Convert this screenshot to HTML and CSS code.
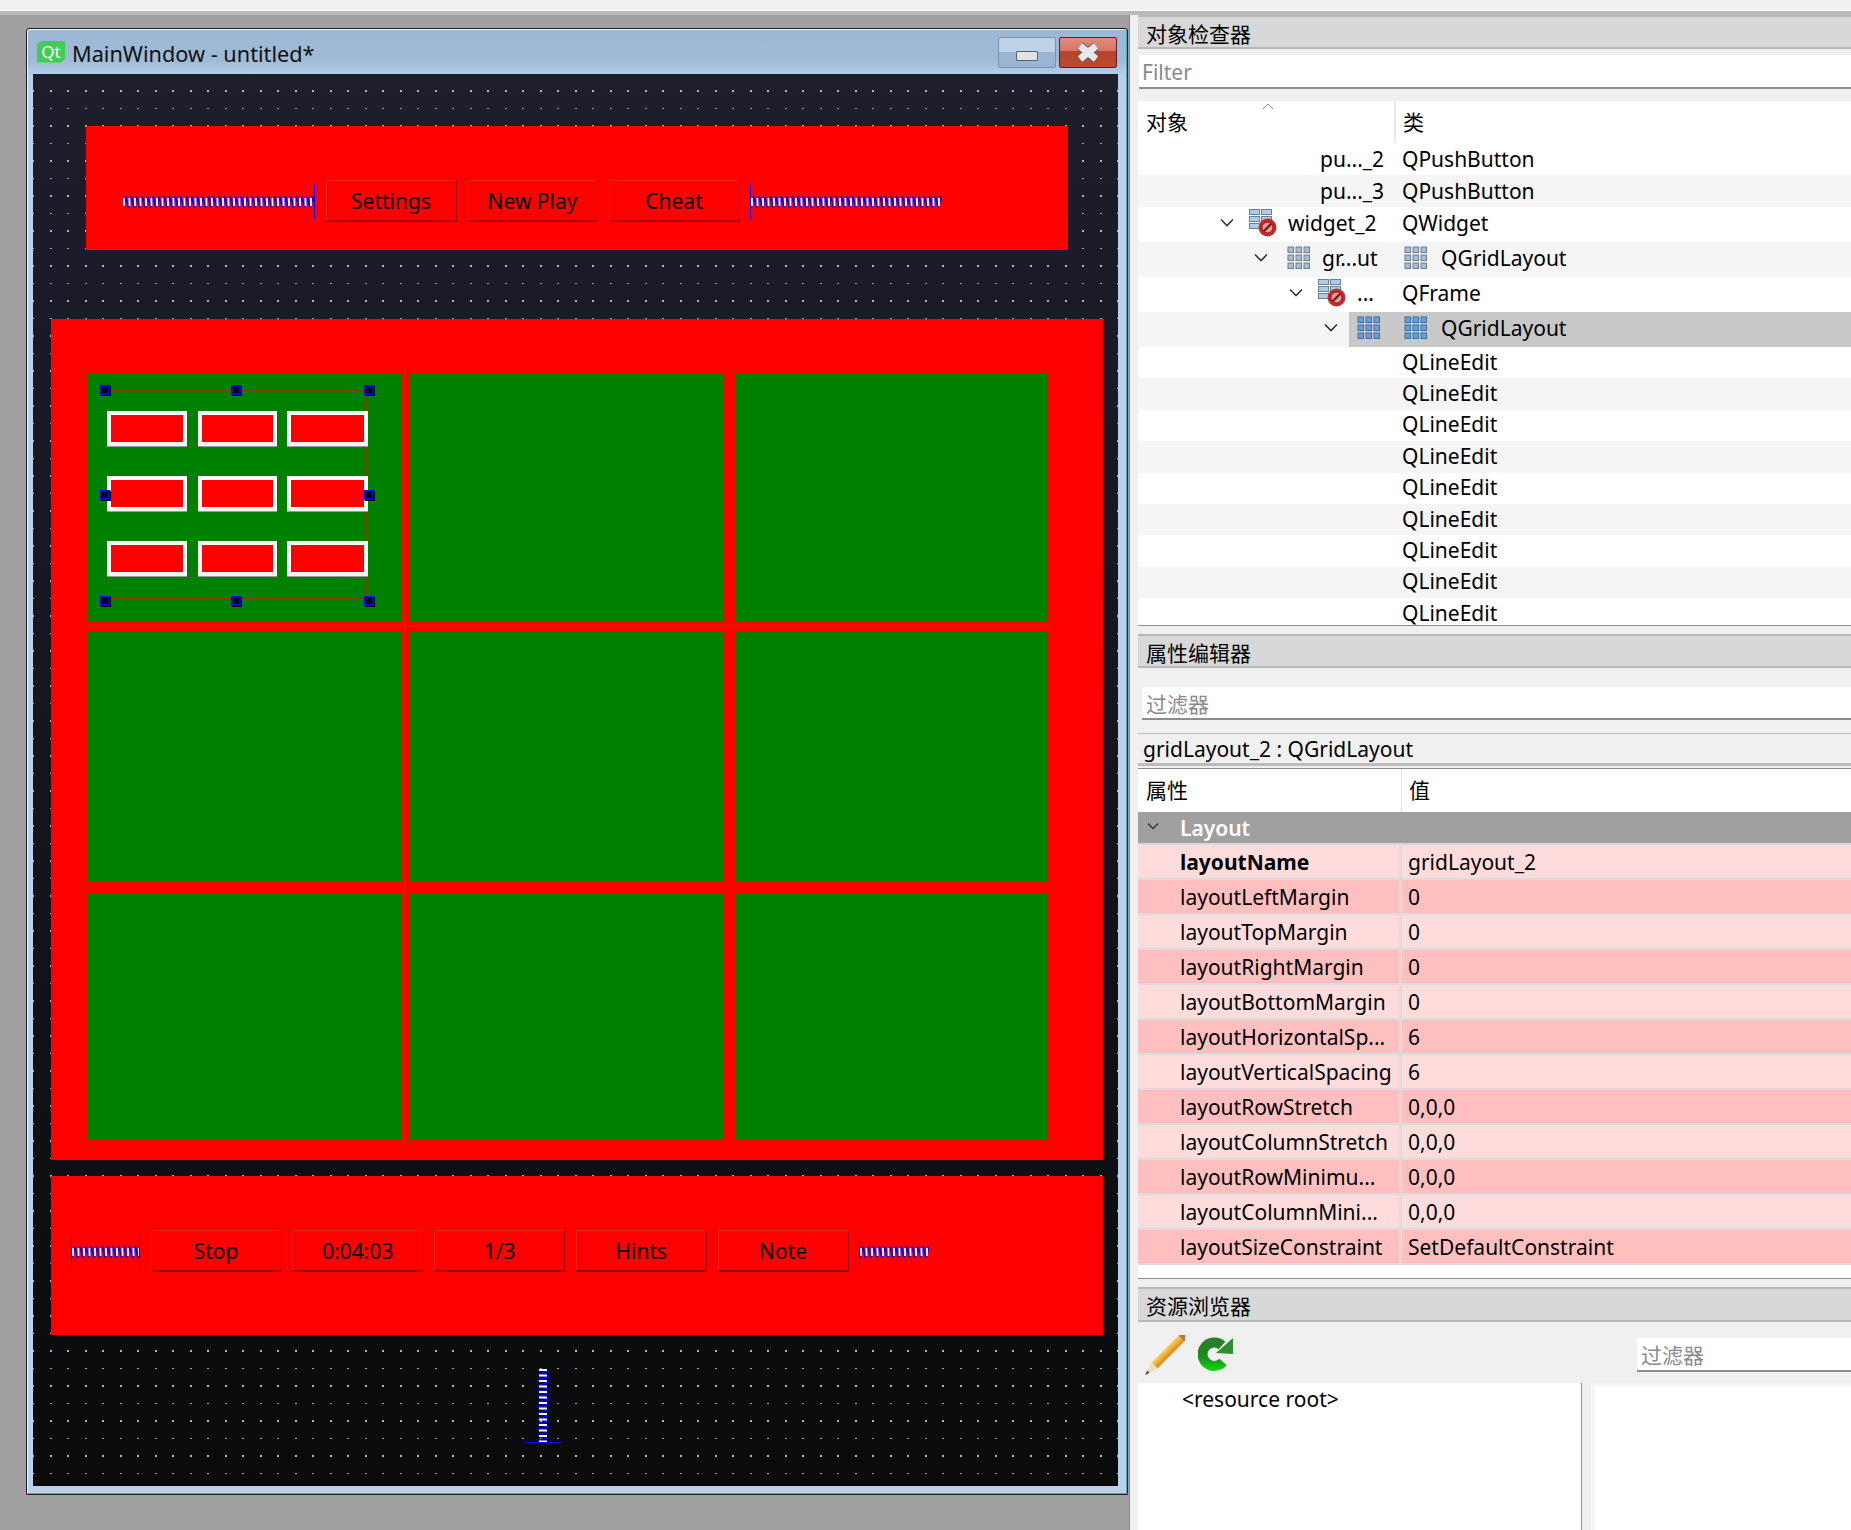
FILE: index.html
```html
<!DOCTYPE html>
<html lang="zh">
<head>
<meta charset="utf-8">
<title>Qt Designer</title>
<link rel="stylesheet" href="styles.css">
</head>
<body>
<svg class="defs" width="0" height="0" aria-hidden="true">
  <defs>
    <symbol id="grid-g" viewBox="0 0 24 24">
      <g fill="#a6bdd6" stroke="#6c7d90" stroke-width="1">
        <rect x="1" y="1" width="5.5" height="5.5"/><rect x="9" y="1" width="5.5" height="5.5"/><rect x="17" y="1" width="5.5" height="5.5"/>
        <rect x="1" y="9" width="5.5" height="5.5"/><rect x="9" y="9" width="5.5" height="5.5"/><rect x="17" y="9" width="5.5" height="5.5"/>
        <rect x="1" y="17" width="5.5" height="5.5"/><rect x="9" y="17" width="5.5" height="5.5"/><rect x="17" y="17" width="5.5" height="5.5"/>
      </g>
    </symbol>
    <symbol id="grid-b" viewBox="0 0 24 24">
      <g fill="#6b9fd6" stroke="#3d6c9e" stroke-width="1">
        <rect x="1" y="1" width="5.5" height="5.5"/><rect x="9" y="1" width="5.5" height="5.5"/><rect x="17" y="1" width="5.5" height="5.5"/>
        <rect x="1" y="9" width="5.5" height="5.5"/><rect x="9" y="9" width="5.5" height="5.5"/><rect x="17" y="9" width="5.5" height="5.5"/>
        <rect x="1" y="17" width="5.5" height="5.5"/><rect x="9" y="17" width="5.5" height="5.5"/><rect x="17" y="17" width="5.5" height="5.5"/>
      </g>
    </symbol>
    <symbol id="widget" viewBox="0 0 28 28">
      <g fill="#a9cdea" stroke="#6d7f93" stroke-width="1">
        <rect x="0.5" y="0.5" width="10" height="5"/><rect x="12.5" y="0.5" width="10" height="5"/>
        <rect x="0.5" y="7.5" width="10" height="5"/><rect x="12.5" y="7.5" width="10" height="5"/>
        <rect x="0.5" y="14.5" width="10" height="5"/>
      </g>
      <circle cx="18.500" cy="18.500" r="9" fill="#c22a2e"/>
      <circle cx="18.500" cy="18.500" r="5.500" fill="#d9a0a0" stroke="#8c1216" stroke-width="1"/>
      <path d="M14.500 22.500 22.500 14.500" stroke="#8c1418" stroke-width="2.400"/>
    </symbol>
    <symbol id="chev" viewBox="0 0 14 9">
      <path d="M1 1.500 7 7.500 13 1.500" fill="none" stroke="#333" stroke-width="1.600"/>
    </symbol>
    <linearGradient id="pen" x1="0" y1="0" x2="1" y2="0">
      <stop offset="0" stop-color="#f9d060"/><stop offset="1" stop-color="#d98a12"/>
    </linearGradient>
    <linearGradient id="ref" gradientUnits="userSpaceOnUse" x1="0" y1="0" x2="0" y2="36">
      <stop offset="0" stop-color="#2c7a30"/><stop offset="0.6" stop-color="#1a8f1a"/><stop offset="1" stop-color="#0ce40c"/>
    </linearGradient>
  </defs>
</svg>

<header class="topbar"></header>
<main class="main">
  <section class="workspace">
    <div class="window">
      <div class="titlebar">
        <span class="qt-logo">Qt</span>
        <span class="wintitle">MainWindow - untitled*</span>
        <div class="winctl">
          <span class="wbtn wmin"><i class="minbar"></i></span>
          <span class="wbtn wclose">
            <svg width="26" height="21" viewBox="0 0 26 21"><path d="M5 4 21 17M21 4 5 17" stroke="#5d5d66" stroke-width="9"/><path d="M5 4 21 17M21 4 5 17" stroke="#e9e9e9" stroke-width="7"/></svg>
          </span>
        </div>
      </div>
      <div class="canvas">
        <div class="panel panel-top">
          <span class="spring sp-r sp-top"></span>
          <button class="qbtn">Settings</button>
          <button class="qbtn">New Play</button>
          <button class="qbtn">Cheat</button>
          <span class="spring sp-l sp-top"></span>
        </div>
        <div class="panel panel-mid">
          <div class="cell first">
            <span class="ledit"></span><span class="ledit"></span><span class="ledit"></span>
            <span class="ledit"></span><span class="ledit"></span><span class="ledit"></span>
            <span class="ledit"></span><span class="ledit"></span><span class="ledit"></span>
            <div class="selbox">
              <i class="hd h-tl"></i><i class="hd h-tc"></i><i class="hd h-tr"></i>
              <i class="hd h-ml"></i><i class="hd h-mr"></i>
              <i class="hd h-bl"></i><i class="hd h-bc"></i><i class="hd h-br"></i>
            </div>
          </div>
          <div class="cell"></div><div class="cell"></div>
          <div class="cell"></div><div class="cell"></div><div class="cell"></div>
          <div class="cell"></div><div class="cell"></div><div class="cell"></div>
        </div>
        <div class="panel panel-bot">
          <span class="spring sp-r sp-l sp-botl"></span>
          <button class="qbtn">Stop</button>
          <button class="qbtn">0:04:03</button>
          <button class="qbtn">1/3</button>
          <button class="qbtn">Hints</button>
          <button class="qbtn">Note</button>
          <span class="spring sp-l sp-botr"></span>
        </div>
        <span class="vspring"></span>
      </div>
    </div>
  </section>

  <aside class="docks">
    <div class="dock-title">对象检查器</div>
    <div class="filter filter-obj">Filter</div>
    <div class="tree">
      <div class="thead">
        <div class="th-obj">对象<svg class="sort" width="12" height="7" viewBox="0 0 12 7"><path d="M1 6 6 1 11 6" fill="none" stroke="#888" stroke-width="1"/></svg></div>
        <div class="th-cls">类</div>
      </div>
      <div class="rows">
        <div class="row r32"><div class="obj obj-end">pu..._2</div><div class="cls">QPushButton</div></div>
        <div class="row r32"><div class="obj obj-end">pu..._3</div><div class="cls">QPushButton</div></div>
        <div class="row r35"><div class="obj d1"><svg class="chev"><use href="#chev"/></svg><span class="item"><svg class="ic-w"><use href="#widget"/></svg>widget_2</span></div><div class="cls">QWidget</div></div>
        <div class="row r35"><div class="obj d2"><svg class="chev"><use href="#chev"/></svg><span class="item"><svg class="ic-g"><use href="#grid-g"/></svg>gr...ut</span></div><div class="cls"><svg class="ic-g"><use href="#grid-g"/></svg>QGridLayout</div></div>
        <div class="row r35"><div class="obj d3"><svg class="chev"><use href="#chev"/></svg><span class="item"><svg class="ic-w"><use href="#widget"/></svg>...</span></div><div class="cls">QFrame</div></div>
        <div class="row r35"><div class="obj d4"><svg class="chev"><use href="#chev"/></svg><span class="item sel"><svg class="ic-g"><use href="#grid-b"/></svg></span></div><div class="cls sel"><svg class="ic-g"><use href="#grid-b"/></svg>QGridLayout</div></div>
        <div class="row rl"><div class="obj"></div><div class="cls">QLineEdit</div></div>
        <div class="row rl"><div class="obj"></div><div class="cls">QLineEdit</div></div>
        <div class="row rl"><div class="obj"></div><div class="cls">QLineEdit</div></div>
        <div class="row rl"><div class="obj"></div><div class="cls">QLineEdit</div></div>
        <div class="row rl"><div class="obj"></div><div class="cls">QLineEdit</div></div>
        <div class="row rl"><div class="obj"></div><div class="cls">QLineEdit</div></div>
        <div class="row rl"><div class="obj"></div><div class="cls">QLineEdit</div></div>
        <div class="row rl"><div class="obj"></div><div class="cls">QLineEdit</div></div>
        <div class="row rl"><div class="obj"></div><div class="cls">QLineEdit</div></div>
      </div>
    </div>

    <div class="dock-title title2">属性编辑器</div>
    <div class="filter filter-prop">过滤器</div>
    <div class="objlabel">gridLayout_2 : QGridLayout</div>
    <div class="props">
      <div class="phead"><div class="ph-a">属性</div><div class="ph-b">值</div></div>
      <div class="pgroup"><svg class="gchev" width="12" height="8"><use href="#chev"/></svg>Layout</div>
      <div class="prow odd"><div class="pn strong">layoutName</div><div class="pv">gridLayout_2</div></div>
      <div class="prow"><div class="pn">layoutLeftMargin</div><div class="pv">0</div></div>
      <div class="prow odd"><div class="pn">layoutTopMargin</div><div class="pv">0</div></div>
      <div class="prow"><div class="pn">layoutRightMargin</div><div class="pv">0</div></div>
      <div class="prow odd"><div class="pn">layoutBottomMargin</div><div class="pv">0</div></div>
      <div class="prow"><div class="pn">layoutHorizontalSp...</div><div class="pv">6</div></div>
      <div class="prow odd"><div class="pn">layoutVerticalSpacing</div><div class="pv">6</div></div>
      <div class="prow"><div class="pn">layoutRowStretch</div><div class="pv">0,0,0</div></div>
      <div class="prow odd"><div class="pn">layoutColumnStretch</div><div class="pv">0,0,0</div></div>
      <div class="prow"><div class="pn">layoutRowMinimu...</div><div class="pv">0,0,0</div></div>
      <div class="prow odd"><div class="pn">layoutColumnMini...</div><div class="pv">0,0,0</div></div>
      <div class="prow"><div class="pn">layoutSizeConstraint</div><div class="pv">SetDefaultConstraint</div></div>
    </div>

    <div class="dock-title title3">资源浏览器</div>
    <div class="restools">
      <svg class="pencil" width="40" height="40" viewBox="0 0 39 39">
        <g transform="rotate(45 19.500 19.500)">
          <rect x="15.500" y="-8" width="8" height="5" rx="1.500" fill="#c86a3a"/>
          <rect x="15.500" y="-3" width="8" height="37" fill="url(#pen)"/>
          <path d="M15.500 34h8l-4 13z" fill="#efdcb4"/>
          <path d="M18 42.500h3l-1.500 4.500z" fill="#444"/>
        </g>
      </svg>
      <svg class="refresh" width="36" height="36" viewBox="0 0 36 36">
        <path d="M25 26A11.700 11.700 0 1 1 24 9.500" fill="none" stroke="url(#ref)" stroke-width="10"/>
        <path d="M35 2 35 18 18 17z" fill="#2f8f2f"/>
      </svg>
      <div class="filter filter-res">过滤器</div>
    </div>
    <div class="respanes">
      <div class="restree">&lt;resource root&gt;</div>
      <div class="reslist"></div>
    </div>
  </aside>
</main>
</body>
</html>
```
FILE: styles.css
```css
* { box-sizing: border-box; }
html {
  margin: 0;
  padding: 0;
  height: 1530px;
  overflow: hidden;
}
body {
  margin: 0;
  padding: 0;
  width: 1851px;
  height: 1530px;
  overflow: hidden;
  background: #f0f0f0;
  color: #000;
  font-family: "Noto Sans", "Noto Sans CJK SC", sans-serif;
  font-size: 21px;
}
.defs { position: absolute; }

.topbar {
  height: 15px;
  background: #f0f0f0;
  border-bottom: 4px solid #b9b9b9;
  box-shadow: inset 0 -1px 0 #fff;
}
.main { display: flex; height: 1515px; }

/* workspace */
.workspace {
  width: 1130px;
  padding: 13px 0 0 26px;
  background: #a0a0a0;
  border-right: 1px solid #8a8a94;
}
.window {
  width: 1102px;
  height: 1467px;
  background: linear-gradient(#9db8d5 0, #a0bbd8 32px, #b7cfe9 46px, #b9d1ea 110px);
  border: 1px solid #1c1c1c;
  box-shadow: inset 1px 1px 0 #eef3f8, inset -1px -1px 0 #3cb0c6;
  border-top-left-radius: 3px;
  border-top-right-radius: 3px;
}
.titlebar {
  height: 45px;
  display: flex;
  align-items: center;
  padding: 0 10px 0 10px;
}
.qt-logo {
  width: 28px;
  height: 22px;
  background: #41cd52;
  color: #fff;
  font-size: 17px;
  line-height: 22px;
  text-align: center;
  clip-path: polygon(4px 0, 100% 0, 100% calc(100% - 4px), calc(100% - 4px) 100%, 0 100%, 0 4px);
}
.wintitle {
  margin: 4px 0 0 7px;
  font-size: 21.700px;
  color: #111;
}
.winctl {
  margin-left: auto;
  align-self: flex-start;
  margin-top: 8px;
  display: flex;
  gap: 3px;
}
.wbtn {
  width: 58px;
  height: 31px;
  border-radius: 2px;
  display: flex;
  align-items: center;
  justify-content: center;
}
.wmin {
  background: linear-gradient(#bdd2e9 50%, #9ab5d3 50%);
  border: 1px solid #7c92ac;
  align-items: flex-end;
  padding-bottom: 6px;
}
.minbar {
  display: block;
  width: 22px;
  height: 10px;
  background: #e2e2e2;
  border: 1px solid #56606e;
  border-radius: 1px;
}
.wclose {
  background: linear-gradient(#e08a7e 0, #d97464 46%, #b7442c 46%, #b9492f 100%);
  border: 1px solid #55202c;
}

/* canvas */
.canvas {
  width: 1085px;
  height: 1412px;
  margin-left: 6px;
  display: flex;
  flex-direction: column;
  align-items: flex-start;
  background-color: #1e1e2c;
  background-image:
    url("data:image/svg+xml,%3Csvg xmlns='http://www.w3.org/2000/svg' width='35' height='35' shape-rendering='crispEdges'%3E%3Cg fill='%23b4b4b4'%3E%3Crect x='0' y='0' width='2' height='2'/%3E%3Crect x='17' y='0' width='2' height='2'/%3E%3C/g%3E%3Cg fill='%23a0a0a0'%3E%3Crect x='0' y='18' width='2' height='1'/%3E%3Crect x='17' y='18' width='2' height='1'/%3E%3C/g%3E%3C/svg%3E"),
    linear-gradient(#1e1e2c 0, #0f1014 76%, #0a0a0a 100%);
  background-position: 17px 16px, 0 0;
  background-repeat: repeat, no-repeat;
}
.panel { background: #f00; display: flex; flex: none; }
.panel-top {
  width: 982px;
  height: 124px;
  margin: 52px 0 0 53px;
  padding: 54px 0 0 37px;
  align-items: flex-start;
  gap: 0 10.500px;
}
.panel-mid {
  width: 1052px;
  height: 841px;
  margin: 69px 0 0 18px;
  padding: 54px 0 0 37px;
  display: grid;
  grid-template-columns: 313px 314px 314px;
  grid-template-rows: 248px 250px 247px;
  gap: 11px 9px;
  position: relative;
  align-content: start;
}
.panel-mid::before {
  content: "";
  position: absolute;
  left: 353px;
  top: 50px;
  bottom: 16px;
  width: 2px;
  background: #c03000;
  opacity: .55;
}
.panel-mid::after {
  content: "";
  position: absolute;
  left: 36px;
  right: 52px;
  top: 306px;
  height: 2px;
  background: #c03000;
  opacity: .55;
}
.panel-bot {
  width: 1052px;
  height: 159px;
  margin: 16px 0 0 18px;
  padding: 54px 0 0 20px;
  align-items: flex-start;
  gap: 0 10.500px;
}
.qbtn {
  flex: none;
  width: 131px;
  height: 42px;
  padding: 1px 0 0;
  background: #f00;
  border: 1px solid #e62020;
  border-right-color: #9c0000;
  border-bottom: 2px solid #a80000;
  font: inherit;
  color: #000;
}
.panel-bot .qbtn { width: 131.250px; }

/* layout springs */
.spring {
  flex: none;
  height: 35px;
  margin-top: 4px;
  background: url("data:image/svg+xml,%3Csvg xmlns='http://www.w3.org/2000/svg' width='11' height='12'%3E%3Cpath d='M0 11.500 2.700 .5 5.500 11.500 8.200 .5 11 11.500' fill='none' stroke='%2300f' stroke-width='1.800'/%3E%3Cpath d='M1 2v8M6.500 2v8' stroke='%23fff' stroke-width='1.800'/%3E%3C/svg%3E") 0 50% repeat-x;
}
.sp-r { border-right: 1px solid #00f; }
.sp-l { border-left: 1px solid #00f; }
.sp-top { width: 192px; }
.sp-botl { width: 69px; }
.sp-botr { width: 70px; }
.vspring {
  flex: none;
  width: 37px;
  height: 74px;
  margin: 34px 0 0 491px;
  border-bottom: 1px solid #00f;
  background: url("data:image/svg+xml,%3Csvg xmlns='http://www.w3.org/2000/svg' width='12' height='11'%3E%3Cpath d='M.5 0 11.500 2.700 .5 5.500 11.500 8.200 .5 11' fill='none' stroke='%2300f' stroke-width='1.800'/%3E%3Cpath d='M2 1h8M2 6.500h8' stroke='%23fff' stroke-width='1.800'/%3E%3C/svg%3E") 50% 0 repeat-y;
}

/* green cells */
.cell { background: #008000; }
.cell:nth-child(3n) { margin-left: 2px; }
.cell.first {
  position: relative;
  display: grid;
  padding: 38px 0 0 19px;
  grid-template-columns: 80px 79px 81px;
  grid-template-rows: 35px 35px 35px;
  gap: 30px 10.500px;
  align-content: start;
}
.ledit {
  position: relative;
  z-index: 1;
  background: #f00;
  border: 4px solid #fff;
  border-bottom-color: #f4f4f4;
  box-shadow: 0 1px 0 #999;
}
.selbox {
  position: absolute;
  left: 17px;
  top: 17px;
  width: 262px;
  height: 210px;
  border: solid #8a3c00;
  border-width: 1px 1px 2px;
}
.hd {
  position: absolute;
  z-index: 2;
  width: 10px;
  height: 10px;
  background: #000;
  border: 2px solid #00f;
  box-shadow: 1px 1px 0 #000;
}
.h-tl { left: -6px; top: -6px; }
.h-tc { left: 125px; top: -6px; }
.h-tr { left: 258px; top: -6px; }
.h-ml { left: -6px; top: 99px; }
.h-mr { left: 258px; top: 99px; }
.h-bl { left: -6px; top: 205px; }
.h-bc { left: 125px; top: 205px; }
.h-br { left: 258px; top: 205px; }

/* docks */
.docks { flex: 1; min-width: 0; margin-left: 8px; display: flex; flex-direction: column; }
.dock-title {
  flex: none;
  height: 34px;
  padding-left: 8px;
  background: #d8d8d8;
  border-top: 2px solid #b8b8b8;
  border-bottom: 2px solid #b8b8b8;
  line-height: 32px;
  font-size: 21px;
  font-family: "Noto Sans CJK SC", sans-serif;
}
.filter {
  flex: none;
  background: #fff;
  border-bottom: 2px solid #8c8c8c;
  color: #8a8a8a;
}
.filter-obj {
  height: 34px;
  margin: 6px 0 0 1px;
  padding-left: 3px;
  line-height: 35px;
}
.filter-prop, .filter-res { font-family: "Noto Sans CJK SC", sans-serif; font-size: 21px; }
.filter-prop {
  height: 33px;
  margin: 19px 0 0 4px;
  padding-left: 4px;
  line-height: 33px;
}

.tree {
  flex: none;
  height: 525px;
  margin-top: 12px;
  background: #fff;
  border-bottom: 1px solid #8c8c94;
  overflow: hidden;
}
.thead {
  height: 42px;
  display: flex;
  font-family: "Noto Sans CJK SC", sans-serif;
  font-size: 21px;
  line-height: 40px;
}
.th-obj {
  position: relative;
  width: 258px;
  padding-left: 8px;
  border-right: 2px solid #e8e8e8;
}
.sort { position: absolute; left: 124px; top: 2px; }
.th-cls { padding-left: 7px; }
.row { display: flex; align-items: stretch; }
.rows .row:nth-child(even) { background: #f5f5f5; }
.r32 { height: 32px; }
.r35 { height: 35px; }
.rl { height: 31.400px; }
.obj { width: 258px; flex: none; display: flex; align-items: center; }
.obj-end { padding: 0 0 1px 182px; }
.d1 { padding-left: 77px; }
.d2 { padding-left: 111px; }
.d3 { padding-left: 146px; }
.d4 { padding-left: 181px; }
.chev { width: 14px; height: 9px; margin: 0 5px 4px; flex: none; }
.item {
  flex: 1;
  align-self: stretch;
  display: flex;
  align-items: center;
  gap: 11px;
  padding: 0 0 4px 8px;
  margin-left: 6px;
}
.cls {
  flex: 1;
  display: flex;
  align-items: center;
  gap: 13px;
  padding: 0 0 2px 6px;
}
.r32 .cls { padding-bottom: 1px; }
.r35 .cls { padding-bottom: 4px; }
.sel { background: #c8c8c8; }
.ic-g { width: 24px; height: 24px; flex: none; }
.ic-w { width: 28px; height: 28px; flex: none; margin-left: -4px; }
.cls .ic-g { margin-left: 2px; }

.title2 { margin-top: 8px; }
.objlabel {
  flex: none;
  height: 33px;
  margin-top: 13px;
  padding-left: 5px;
  background: #f0f0f0;
  border-top: 1px solid #bcbcbc;
  border-bottom: 3px solid #bcbcbc;
  line-height: 30px;
}
.props {
  flex: none;
  height: 511px;
  margin-top: 2px;
  background: #fff;
  border-top: 1px solid #8c8c94;
  border-bottom: 1px solid #8c8c94;
}
.phead {
  height: 43px;
  display: flex;
  font-family: "Noto Sans CJK SC", sans-serif;
  font-size: 21px;
  line-height: 41px;
}
.ph-a { width: 264px; padding-left: 8px; border-right: 1px solid #e4e4e4; }
.ph-b { padding-left: 7px; }
.pgroup {
  height: 33px;
  padding-left: 42px;
  position: relative;
  background: #a0a0a0;
  color: #fff;
  font-weight: 600;
  line-height: 32px;
  border-bottom: 2px solid #d8d8d8;
}
.gchev { position: absolute; left: 9px; top: 10px; }
.prow {
  height: 35px;
  display: flex;
  background: #ffbfbf;
  border-bottom: 2px solid #dcdcdc;
  line-height: 34px;
}
.prow.odd { background: #ffdcdc; }
.pn {
  width: 264px;
  padding-left: 42px;
  border-right: 3px solid #dcdcdc;
  white-space: nowrap;
}
.pn.strong { font-weight: 700; }
.pv { padding-left: 6px; }

.title3 { margin-top: 8px; height: 35px; }
.restools {
  flex: none;
  height: 61px;
  display: flex;
  align-items: flex-start;
  background: #f0f0f0;
}
.pencil { margin: 13px 0 0 7px; }
.refresh { margin: 14px 0 0 13px; }
.filter-res {
  width: 214px;
  height: 34px;
  margin: 16px 0 0 auto;
  padding-left: 4px;
  line-height: 32px;
}
.respanes { flex: 1; display: flex; min-height: 0; }
.restree {
  width: 444px;
  padding: 2px 0 0 44px;
  background: #fff;
  border-right: 1px solid #8c8c94;
}
.reslist {
  flex: 1;
  margin-left: 9px;
  background: #fff;
  border-left: 4px solid #f4f4f4;
  border-top: 3px solid #f4f4f4;
}
```
